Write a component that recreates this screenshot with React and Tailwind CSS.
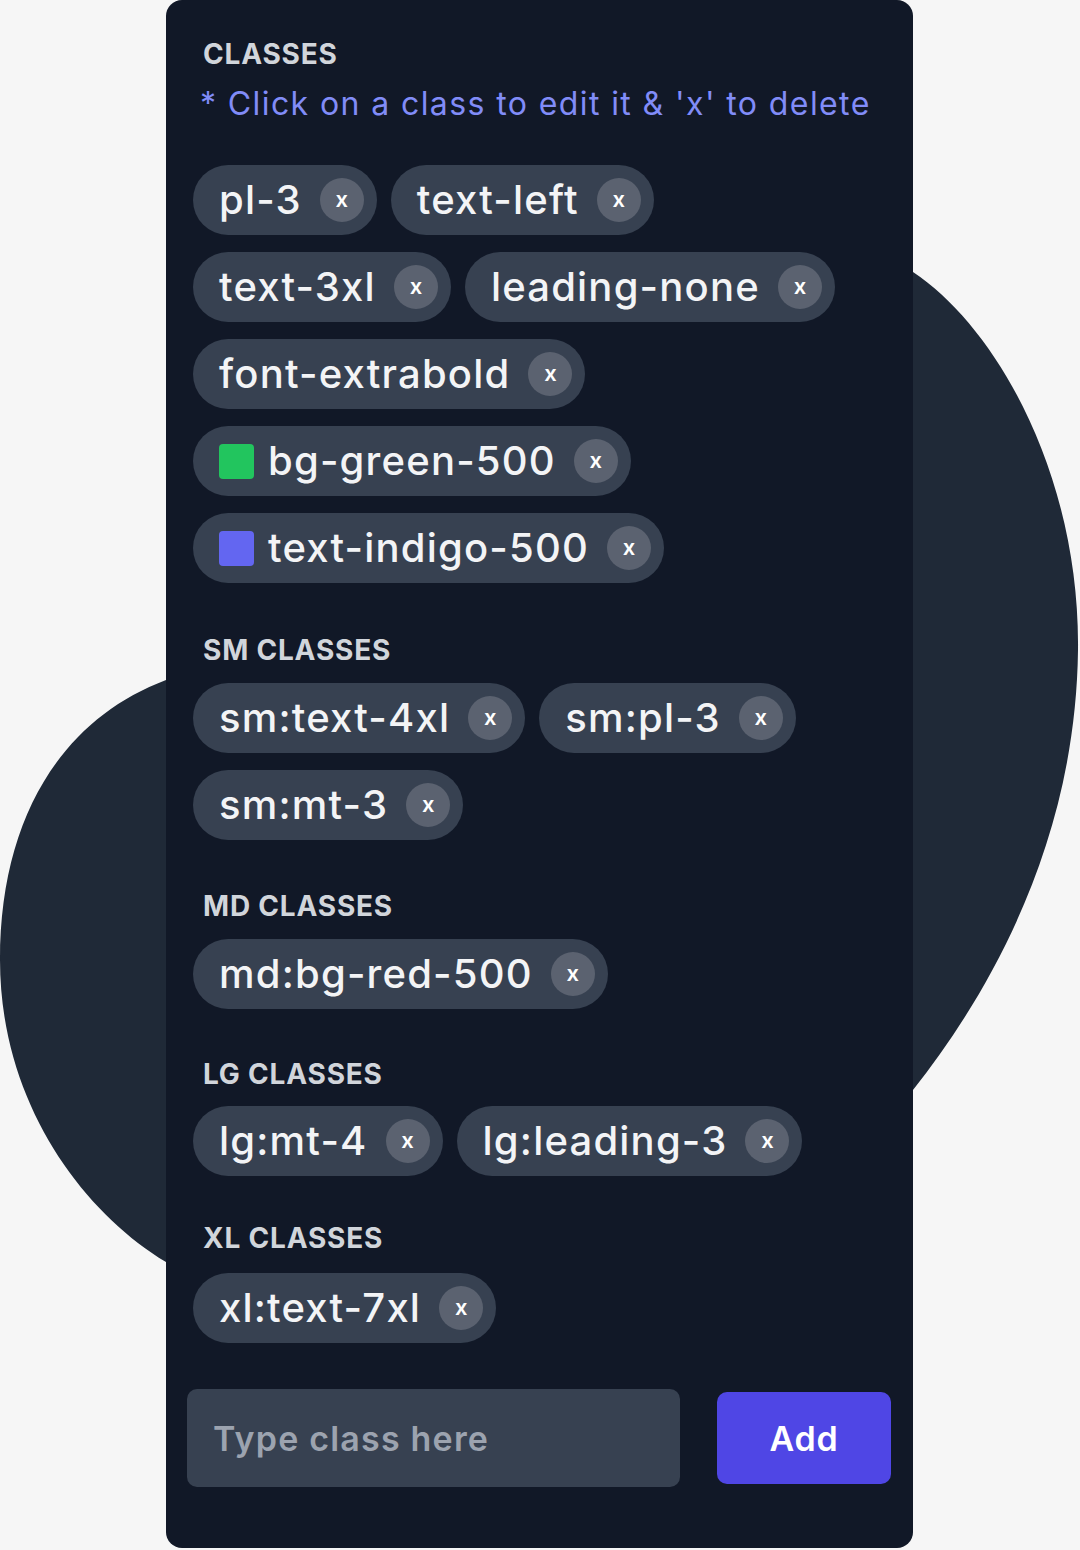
import React from "react";

const font = { fontFamily: "Inter, 'Noto Sans', 'Liberation Sans', sans-serif" };

function Chip({ label, swatch }) {
  return (
    <div className="flex h-[70px] items-center rounded-full bg-[#374151] pl-[26px] pr-[13px]">
      {swatch && <span className={`mr-[14px] h-[35px] w-[35px] rounded-[4px] ${swatch}`} />}
      <span className="text-[40px] font-medium leading-none tracking-[1.2px] text-[#f3f4f6]">{label}</span>
      <span className="ml-[18px] flex h-[44px] w-[44px] items-center justify-center rounded-full bg-[#5b6270] pb-[3px] text-[22px] font-semibold leading-none text-white">
        x
      </span>
    </div>
  );
}

function Header({ children }) {
  return (
    <div className="pl-[16px] text-[28px] font-bold leading-[34px] tracking-[0.8px] text-[#d1d5db]">
      {children}
    </div>
  );
}

function Chips({ items }) {
  return (
    <div className="flex flex-wrap gap-x-[14px] gap-y-[17px] pl-[6px]">
      {items.map((it) => (
        <Chip key={it.label} label={it.label} swatch={it.swatch} />
      ))}
    </div>
  );
}

export default function App() {
  return (
    <div style={font} className="relative h-[1550px] w-[1080px] overflow-hidden bg-[#f6f6f6]">
      <svg className="absolute left-0 top-0" width="1080" height="1550" viewBox="0 0 1080 1550">
        <path
          d="M913 272 C1000 330 1080 480 1078 650 C1076 830 1000 980 913 1090 L600 1300 L166 1262 C80 1210 0 1100 0 960 C0 820 60 720 166 680 L600 300 Z"
          fill="#1f2937"
        />
      </svg>
      <div className="relative ml-[166px] flex h-[1548px] w-[747px] flex-col rounded-[16px] bg-[#111827] px-[21px] pt-[37px]">
        <Header>CLASSES</Header>
        <div className="mt-[13px] pl-[13px] text-[32px] leading-[40px] tracking-[1.4px] text-[#818cf8]">
          * Click on a class to edit it &amp; 'x' to delete
        </div>
        <div className="mt-[41px]">
          <Chips
            items={[
              { label: "pl-3" },
              { label: "text-left" },
              { label: "text-3xl" },
              { label: "leading-none" },
              { label: "font-extrabold" },
              { label: "bg-green-500", swatch: "bg-[#22c55e]" },
              { label: "text-indigo-500", swatch: "bg-[#6366f1]" },
            ]}
          />
        </div>
        <div className="mt-[50px]">
          <Header>SM CLASSES</Header>
        </div>
        <div className="mt-[16px]">
          <Chips items={[{ label: "sm:text-4xl" }, { label: "sm:pl-3" }, { label: "sm:mt-3" }]} />
        </div>
        <div className="mt-[49px]">
          <Header>MD CLASSES</Header>
        </div>
        <div className="mt-[16px]">
          <Chips items={[{ label: "md:bg-red-500" }]} />
        </div>
        <div className="mt-[48px]">
          <Header>LG CLASSES</Header>
        </div>
        <div className="mt-[15px]">
          <Chips items={[{ label: "lg:mt-4" }, { label: "lg:leading-3" }]} />
        </div>
        <div className="mt-[45px]">
          <Header>XL CLASSES</Header>
        </div>
        <div className="mt-[18px]">
          <Chips items={[{ label: "xl:text-7xl" }]} />
        </div>
        <div className="mt-[46px] flex items-center justify-between">
          <div className="flex h-[98px] w-[493px] items-center rounded-[10px] bg-[#374151] pl-[26px] text-[34px] font-semibold tracking-[1.2px] text-[#9ca3af]">
            Type class here
          </div>
          <div className="mr-[1px] flex h-[92px] w-[174px] items-center justify-center rounded-[10px] bg-[#4f46e5] text-[34px] font-semibold tracking-[0.8px] text-white">
            Add
          </div>
        </div>
      </div>
    </div>
  );
}
